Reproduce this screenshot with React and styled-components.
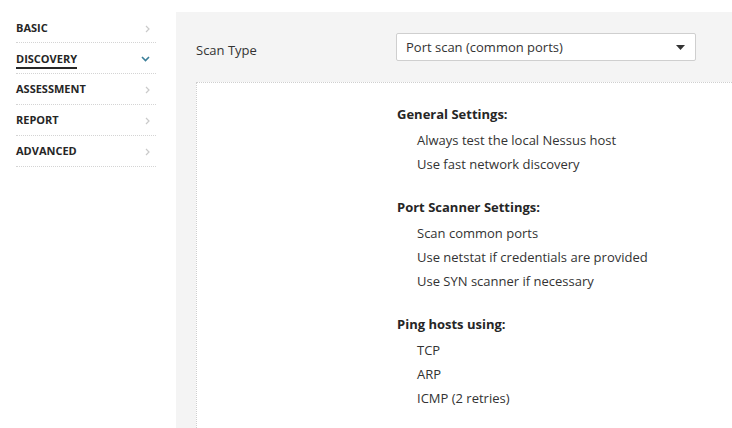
import React from "react";
import styled, { createGlobalStyle } from "styled-components";

const GlobalStyle = createGlobalStyle`
  html, body {
    margin: 0;
    padding: 0;
    background: #fff;
  }
  body {
    font-family: "Open Sans", "Liberation Sans", sans-serif;
    color: #333;
  }
`;

const Page = styled.div`
  display: flex;
  align-items: stretch;
  min-height: 428px;
`;

const Sidebar = styled.nav`
  width: 140px;
  margin-left: 16px;
  padding-top: 13px;
  flex-shrink: 0;
`;

const NavItem = styled.div`
  display: flex;
  align-items: center;
  justify-content: space-between;
  height: 30px;
  padding-top: 2px;
  box-sizing: border-box;
  border-bottom: 1px dotted #d4d4d4;
  padding-right: 6px;
  & + & {
    height: 31px;
  }
`;

const NavLabel = styled.span`
  font-size: 11px;
  font-weight: 700;
  color: #262626;
  text-transform: uppercase;
  padding-bottom: 1px;
  border-bottom: 2px solid ${(p) => (p.$active ? "#262626" : "transparent")};
  margin-top: ${(p) => (p.$active ? "1px" : "0")};
`;

const Main = styled.main`
  flex: 1;
  margin-left: 20px;
  margin-top: 12px;
  background: #f4f4f4;
  padding: 21px 0 0 20px;
  display: flex;
  flex-direction: column;
`;

const FieldRow = styled.div`
  display: flex;
  align-items: flex-start;
  margin-bottom: 21px;
`;

const FieldLabel = styled.div`
  width: 200px;
  font-size: 13px;
  line-height: 18px;
  padding-top: 8px;
  color: #333;
`;

const SelectBox = styled.div`
  box-sizing: border-box;
  width: 300px;
  height: 28px;
  background: #fff;
  border: 1px solid #cfcfcf;
  border-radius: 2px;
  display: flex;
  align-items: center;
  justify-content: space-between;
  padding: 0 10px 0 9px;
  font-size: 13px;
  color: #333;
`;

const Panel = styled.section`
  flex: 1;
  background: #fff;
  border-top: 1px dotted #cfcfcf;
  border-left: 1px dotted #cfcfcf;
  padding: 22px 0 0 200px;
`;

const Section = styled.div`
  & + & {
    margin-top: 22px;
  }
`;

const SectionTitle = styled.div`
  font-size: 13px;
  font-weight: 700;
  line-height: 18px;
  color: #262626;
  margin-bottom: 5px;
`;

const Item = styled.div`
  font-size: 13px;
  line-height: 24px;
  color: #333;
  margin-left: 20px;
`;

const ChevronRight = () => (
  <svg width="5" height="8" viewBox="0 0 5 8">
    <path d="M1 1l3 3-3 3" fill="none" stroke="#cacaca" strokeWidth="1.2" />
  </svg>
);

const ChevronDown = () => (
  <svg width="9" height="6" viewBox="0 0 9 6">
    <path d="M1 1l3.5 3.5L8 1" fill="none" stroke="#3b7f99" strokeWidth="1.6" />
  </svg>
);

const Caret = () => (
  <svg width="9" height="5" viewBox="0 0 9 5">
    <path d="M0 0h9L4.5 5z" fill="#333" />
  </svg>
);

const navItems = [
  { label: "Basic" },
  { label: "Discovery", active: true },
  { label: "Assessment" },
  { label: "Report" },
  { label: "Advanced" },
];

const sections = [
  {
    title: "General Settings:",
    items: ["Always test the local Nessus host", "Use fast network discovery"],
  },
  {
    title: "Port Scanner Settings:",
    items: [
      "Scan common ports",
      "Use netstat if credentials are provided",
      "Use SYN scanner if necessary",
    ],
  },
  {
    title: "Ping hosts using:",
    items: ["TCP", "ARP", "ICMP (2 retries)"],
  },
];

export default function App() {
  return (
    <>
      <GlobalStyle />
      <Page>
        <Sidebar>
          {navItems.map((n) => (
            <NavItem key={n.label}>
              <NavLabel $active={n.active}>{n.label}</NavLabel>
              {n.active ? <ChevronDown /> : <ChevronRight />}
            </NavItem>
          ))}
        </Sidebar>
        <Main>
          <FieldRow>
            <FieldLabel>Scan Type</FieldLabel>
            <SelectBox>
              <span>Port scan (common ports)</span>
              <Caret />
            </SelectBox>
          </FieldRow>
          <Panel>
            {sections.map((s) => (
              <Section key={s.title}>
                <SectionTitle>{s.title}</SectionTitle>
                {s.items.map((it) => (
                  <Item key={it}>{it}</Item>
                ))}
              </Section>
            ))}
          </Panel>
        </Main>
      </Page>
    </>
  );
}
